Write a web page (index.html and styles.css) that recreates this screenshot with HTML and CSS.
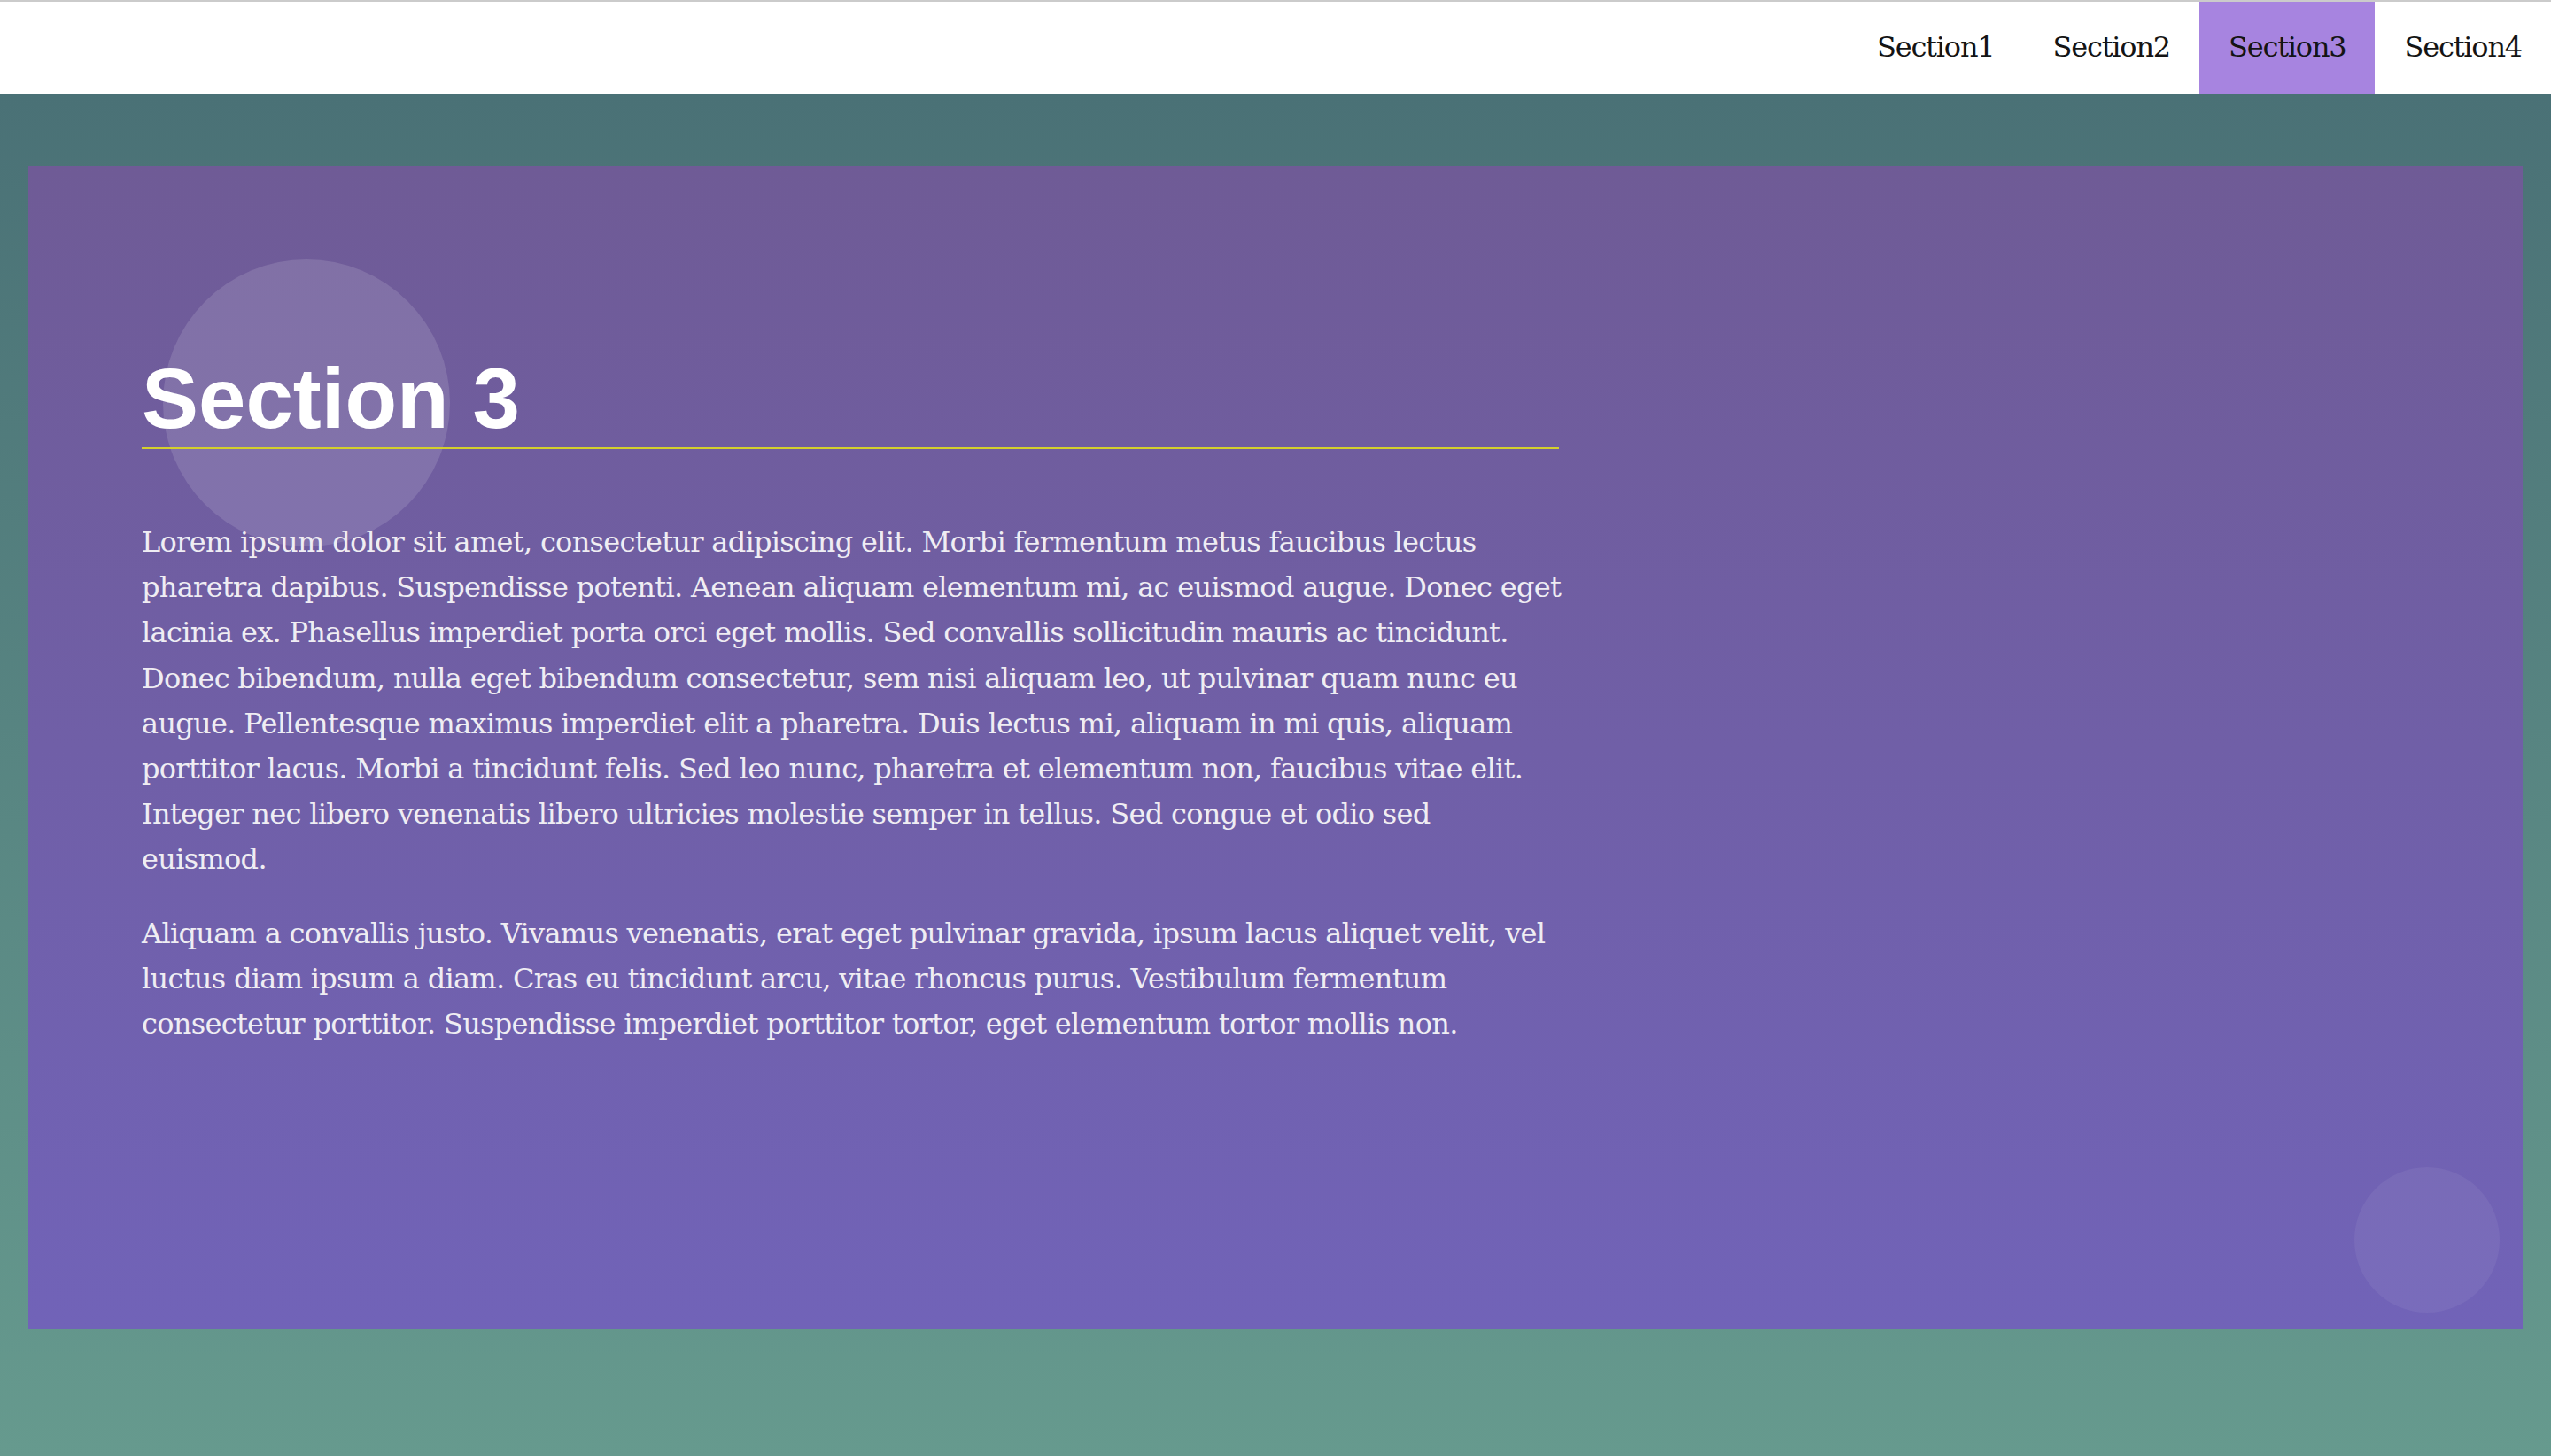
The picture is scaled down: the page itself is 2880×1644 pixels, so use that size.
FILE: index.html
```html
<!DOCTYPE html>
<html lang="en">
<head>
<meta charset="utf-8">
<title>Section 3</title>
<link rel="stylesheet" href="styles.css">
</head>
<body>
<header class="topbar">
  <nav class="nav">
    <a class="nav-item" href="#s1">Section1</a>
    <a class="nav-item" href="#s2">Section2</a>
    <a class="nav-item active" href="#s3">Section3</a>
    <a class="nav-item" href="#s4">Section4</a>
  </nav>
</header>
<main class="main">
  <section class="card" id="s3">
    <span class="bubble bubble-big"></span>
    <span class="bubble bubble-small"></span>
    <div class="content">
      <h2 class="title">Section 3</h2>
      <p class="text">Lorem ipsum dolor sit amet, consectetur adipiscing elit. Morbi fermentum metus faucibus lectus<br>
pharetra dapibus. Suspendisse potenti. Aenean aliquam elementum mi, ac euismod augue. Donec eget<br>
lacinia ex. Phasellus imperdiet porta orci eget mollis. Sed convallis sollicitudin mauris ac tincidunt.<br>
Donec bibendum, nulla eget bibendum consectetur, sem nisi aliquam leo, ut pulvinar quam nunc eu<br>
augue. Pellentesque maximus imperdiet elit a pharetra. Duis lectus mi, aliquam in mi quis, aliquam<br>
porttitor lacus. Morbi a tincidunt felis. Sed leo nunc, pharetra et elementum non, faucibus vitae elit.<br>
Integer nec libero venenatis libero ultricies molestie semper in tellus. Sed congue et odio sed<br>
euismod.</p>
      <p class="text">Aliquam a convallis justo. Vivamus venenatis, erat eget pulvinar gravida, ipsum lacus aliquet velit, vel<br>
luctus diam ipsum a diam. Cras eu tincidunt arcu, vitae rhoncus purus. Vestibulum fermentum<br>
consectetur porttitor. Suspendisse imperdiet porttitor tortor, eget elementum tortor mollis non.</p>
    </div>
  </section>
</main>
</body>
</html>
```

FILE: styles.css
```css
* { box-sizing: border-box; }
html, body { margin: 0; padding: 0; }
body {
  min-height: 1644px;
  background: linear-gradient(to bottom, #4a7075 0px, #4a7176 106px, #669a8e 1644px);
  font-family: "DejaVu Serif", "Liberation Serif", serif;
}
.topbar {
  background: #ffffff;
  border-top: 2px solid #cbcbcb;
  height: 106px;
  display: flex;
  justify-content: flex-end;
}
.nav {
  display: flex;
  align-items: stretch;
}
.nav-item {
  display: flex;
  align-items: center;
  padding: 0 33px 2px 33px;
  font-size: 32px;
  letter-spacing: -1.2px;
  color: #141414;
  text-decoration: none;
}
.nav-item.active { background: #a784e0; }
.main {
  padding: 81px 32px 0 32px;
}
.card {
  position: relative;
  overflow: hidden;
  height: 1314px;
  padding: 128px;
  background: linear-gradient(to bottom, #6f5b96 0%, #7163b8 100%);
}
.content {
  position: relative;
  width: 1600px;
}
.bubble {
  position: absolute;
  border-radius: 50%;
  display: block;
}
.bubble-big {
  left: 152px;
  top: 106px;
  width: 324px;
  height: 324px;
  background: rgba(255, 255, 255, 0.13);
}
.bubble-small {
  right: 26px;
  bottom: 19px;
  width: 164px;
  height: 164px;
  background: rgba(255, 255, 255, 0.06);
}
.title {
  margin: 80px 0;
  font-family: "Liberation Sans", Arial, sans-serif;
  font-weight: 700;
  font-size: 96px;
  line-height: normal;
  color: #ffffff;
  border-bottom: 2px solid #d4cf2c;
}
.text {
  margin: 32px -60px 32px 0;
  font-size: 32px;
  letter-spacing: -0.7px;
  line-height: 51.2px;
  color: #efedf3;
}
```
